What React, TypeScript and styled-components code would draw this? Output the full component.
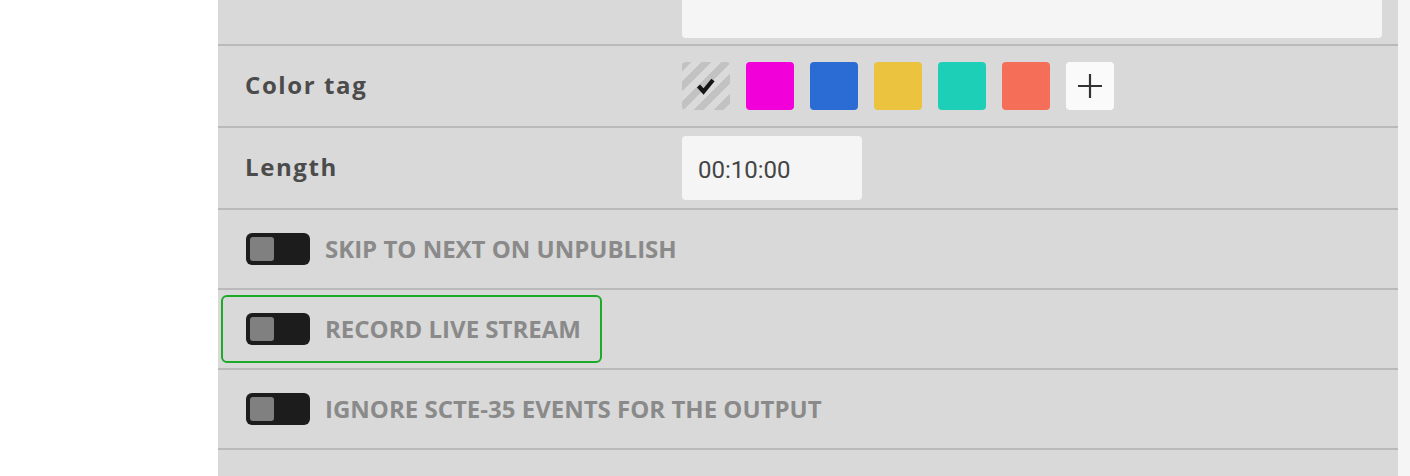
import React from "react";
import styled, { createGlobalStyle } from "styled-components";

const GlobalStyle = createGlobalStyle`
  html, body {
    margin: 0;
    padding: 0;
    background: #ffffff;
  }
  * {
    box-sizing: border-box;
  }
`;

const Page = styled.div`
  display: flex;
  height: 476px;
  overflow: hidden;
`;

const SideGap = styled.div`
  width: 218px;
  background: #ffffff;
`;

const Panel = styled.main`
  width: 1180px;
  background: #d9d9d9;
  display: flex;
  flex-direction: column;
  overflow: hidden;
`;

const RightEdge = styled.div`
  flex: 1;
  background: #f5f5f5;
`;

const DescriptionRow = styled.div`
  height: 46px;
  padding: 0 16px 6px 464px;
  border-bottom: 2px solid #bababa;
  overflow: hidden;
`;

const TextArea = styled.textarea`
  display: block;
  width: 100%;
  height: 120px;
  margin-top: -82px;
  border: none;
  border-radius: 4px;
  background: #f5f5f5;
  resize: none;
  outline: none;
`;

const FieldRow = styled.div`
  display: grid;
  grid-template-columns: 464px 1fr;
  align-items: center;
  height: 82px;
  padding-right: 16px;
  border-bottom: 2px solid #bababa;
`;

const FieldLabel = styled.label`
  padding: 0 0 4px 27px;
  font-family: "Open Sans", "Liberation Sans", sans-serif;
  font-weight: 700;
  font-size: 24px;
  letter-spacing: 1.6px;
  color: #4b4b4b;
`;

const Swatches = styled.div`
  display: flex;
  gap: 16px;
`;

const Swatch = styled.button<{ $color: string }>`
  width: 48px;
  height: 48px;
  padding: 0;
  border: none;
  border-radius: 4px;
  background: ${(p) => p.$color};
  display: flex;
  align-items: center;
  justify-content: center;
  cursor: pointer;
`;

const NoneSwatch = styled(Swatch)`
  background: repeating-linear-gradient(
    135deg,
    #c2c2c2 0px,
    #c2c2c2 7px,
    #dadada 7px,
    #dadada 14px
  );
`;

const TimeInput = styled.input`
  width: 180px;
  height: 64px;
  padding: 3px 16px 0;
  border: none;
  border-radius: 4px;
  background: #f5f5f5;
  font-family: Roboto, "Liberation Sans", sans-serif;
  font-size: 24px;
  color: #454545;
  outline: none;
`;

const ToggleRow = styled.div`
  display: flex;
  align-items: center;
  height: 80px;
  border-bottom: 2px solid #bababa;
`;

const ToggleLabel = styled.label<{ $focused?: boolean }>`
  display: inline-flex;
  align-items: center;
  gap: 15px;
  height: 68px;
  margin-left: 3px;
  padding: 0 19px 0 23px;
  border: 2px solid ${(p) => (p.$focused ? "#1caa28" : "transparent")};
  border-radius: 6px;
  font-family: "Open Sans", "Liberation Sans", sans-serif;
  font-weight: 700;
  font-size: 24px;
  color: #8a8a8a;
  cursor: pointer;
`;

const ToggleText = styled.span`
  margin-top: -2px;
`;

const Switch = styled.span`
  display: inline-flex;
  width: 64px;
  height: 32px;
  padding: 4px;
  border-radius: 6px;
  background: #1c1c1c;
`;

const Knob = styled.span`
  width: 24px;
  height: 24px;
  border-radius: 3px;
  background: #808080;
`;

const colors = ["#f200da", "#2a6cd4", "#ebc33e", "#1dcfb6", "#f46e58"];

const toggles = [
  { label: "SKIP TO NEXT ON UNPUBLISH", focused: false },
  { label: "RECORD LIVE STREAM", focused: true },
  { label: "IGNORE SCTE-35 EVENTS FOR THE OUTPUT", focused: false },
];

const App: React.FC = () => {
  return (
    <Page>
      <GlobalStyle />
      <SideGap />
      <Panel>
        <DescriptionRow>
          <TextArea readOnly />
        </DescriptionRow>

        <FieldRow>
          <FieldLabel>Color tag</FieldLabel>
          <Swatches>
            <NoneSwatch $color="transparent" aria-label="No color">
              <svg width="20" height="20" viewBox="0 0 20 20">
                <polyline
                  points="2.5,10 7.5,15.5 17,4"
                  fill="none"
                  stroke="#151515"
                  strokeWidth="4.2"
                />
              </svg>
            </NoneSwatch>
            {colors.map((c) => (
              <Swatch key={c} $color={c} aria-label={c} />
            ))}
            <Swatch $color="#fafafa" aria-label="Add color">
              <svg width="26" height="26" viewBox="0 0 26 26">
                <path d="M13 1v24M1 13h24" stroke="#333" strokeWidth="2.2" />
              </svg>
            </Swatch>
          </Swatches>
        </FieldRow>

        <FieldRow>
          <FieldLabel>Length</FieldLabel>
          <TimeInput defaultValue="00:10:00" />
        </FieldRow>

        {toggles.map((t) => (
          <ToggleRow key={t.label}>
            <ToggleLabel $focused={t.focused}>
              <Switch>
                <Knob />
              </Switch>
              <ToggleText>{t.label}</ToggleText>
            </ToggleLabel>
          </ToggleRow>
        ))}
      </Panel>
      <RightEdge />
    </Page>
  );
};

export default App;
